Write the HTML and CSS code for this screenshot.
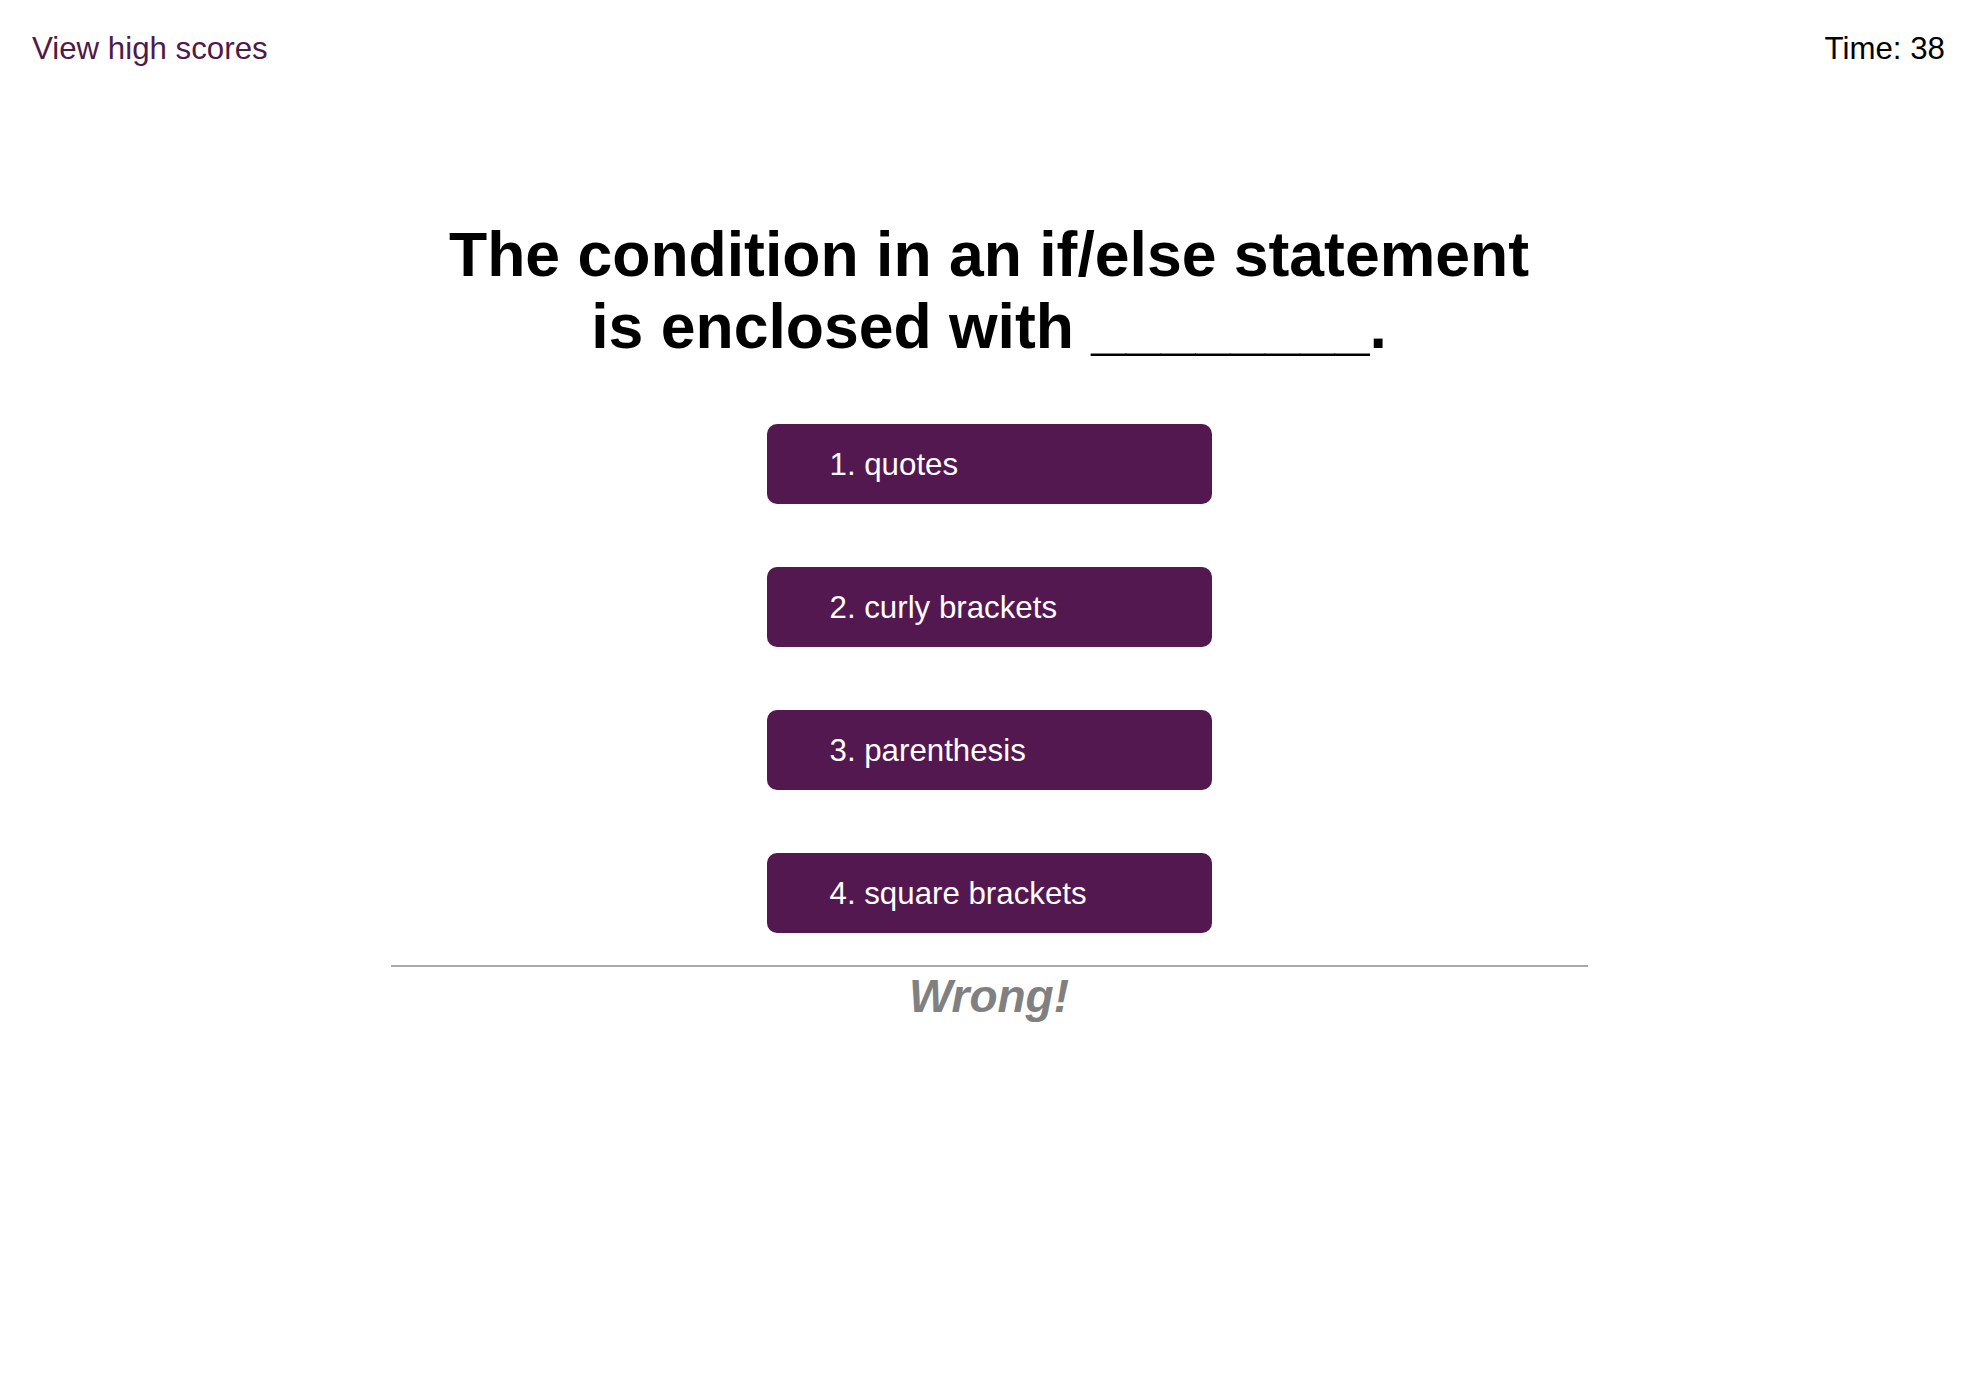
FILE: index.html
```html
<!DOCTYPE html>
<html lang="en">
<head>
<meta charset="utf-8">
<title>Code Quiz</title>
<link rel="stylesheet" href="styles.css">
</head>
<body>
<header class="topbar">
  <a class="scores-link" href="#">View high scores</a>
  <div class="timer">Time: 38</div>
</header>
<main class="quiz">
  <h1 class="question">The condition in an if/else statement is enclosed with ________.</h1>
  <div class="answers">
    <button class="answer">1. quotes</button>
    <button class="answer">2. curly brackets</button>
    <button class="answer">3. parenthesis</button>
    <button class="answer">4. square brackets</button>
  </div>
  <div class="feedback">
    <p class="feedback-text">Wrong!</p>
  </div>
</main>
</body>
</html>
```
FILE: styles.css
```css
html, body {
  margin: 0;
  padding: 0;
  background: #ffffff;
}

body {
  font-family: "Liberation Sans", Arial, sans-serif;
  color: #000;
}

.topbar {
  display: flex;
  justify-content: space-between;
  align-items: flex-start;
  padding: 31px 33px 0 32px;
  font-size: 31.25px;
}

.scores-link {
  color: #4e1a4c;
  text-decoration: none;
}

.timer {
  color: #000;
}

.quiz {
  display: flex;
  flex-direction: column;
  align-items: center;
}

.question {
  margin: 151px 0 0 0;
  max-width: 1110px;
  font-size: 62.5px;
  font-weight: bold;
  line-height: normal;
  text-align: center;
}

.answers {
  display: flex;
  flex-direction: column;
  gap: 63px;
  margin-top: 62px;
}

.answer {
  width: 445px;
  height: 80px;
  padding: 2px 0 0 63px;
  border: none;
  border-radius: 10px;
  background: #531850;
  color: #fff;
  font-family: "Liberation Sans", Arial, sans-serif;
  font-size: 31.25px;
  text-align: left;
  cursor: pointer;
}

.feedback {
  width: 1197px;
  margin-top: 32px;
  border-top: 2px solid #a9a9a9;
  text-align: center;
}

.feedback-text {
  margin: 2px 0 0 0;
  font-size: 46px;
  font-weight: bold;
  font-style: italic;
  color: #808080;
}
```
